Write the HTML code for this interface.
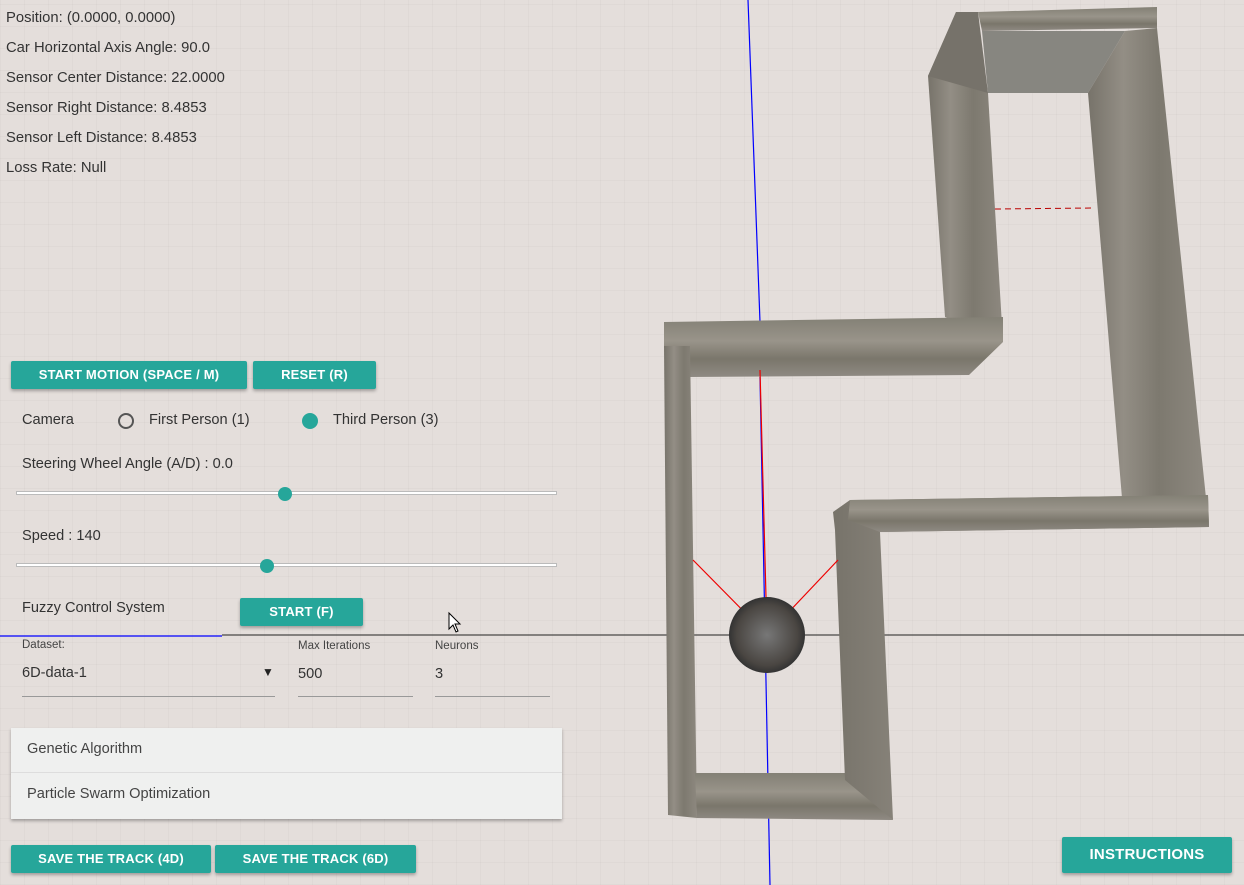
<!DOCTYPE html>
<html><head><meta charset="utf-8"><style>
*{box-sizing:border-box;margin:0;padding:0}
body{width:1244px;height:885px;overflow:hidden;position:relative;font-family:"Liberation Sans",sans-serif;
background-color:#e4dedb;
background-image:repeating-linear-gradient(90deg,rgba(0,0,0,0.025) 0 1px,transparent 1px 24px),repeating-linear-gradient(0deg,rgba(0,0,0,0.025) 0 1px,transparent 1px 22px);}
.t{position:absolute;left:6px;font-size:14.8px;color:#333}
.btn{position:absolute;background:#26a69a;color:#fff;font-weight:bold;font-size:13px;text-align:center;border-radius:2px;box-shadow:0 2px 3px rgba(0,0,0,0.3);letter-spacing:0.2px}
.lbl{position:absolute;font-size:14.6px;color:#333}
.sl{position:absolute;left:16px;width:541px;height:4px;border:1px solid #bbb;background:#fff}
.th{position:absolute;width:14px;height:14px;border-radius:50%;background:#26a69a}
.sm{position:absolute;font-size:11.5px;color:#444}
.ul{position:absolute;height:1px;background:#999}
</style></head><body>
<svg width="1244" height="885" style="position:absolute;left:0;top:0">
<defs>
<linearGradient id="gv" x1="0" x2="1" y1="0" y2="0">
<stop offset="0" stop-color="#77736a"/><stop offset="0.3" stop-color="#938e85"/><stop offset="0.6" stop-color="#7d796f"/><stop offset="1" stop-color="#8d887f"/></linearGradient>
<linearGradient id="gh" x1="0" x2="0" y1="0" y2="1">
<stop offset="0" stop-color="#838075"/><stop offset="0.4" stop-color="#99948a"/><stop offset="0.7" stop-color="#7a766b"/><stop offset="1" stop-color="#8f8a83"/></linearGradient>
<radialGradient id="gb"><stop offset="0" stop-color="#777"/><stop offset="0.8" stop-color="#4a4642"/><stop offset="1" stop-color="#333"/></radialGradient>
</defs>
<line x1="748" y1="0" x2="760" y2="322" stroke="#00f" stroke-width="1.2"/>
<line x1="760" y1="377" x2="770" y2="885" stroke="#00f" stroke-width="1.2"/>
<line x1="222" y1="635" x2="1244" y2="635" stroke="#222" stroke-width="1"/>
<line x1="0" y1="636" x2="222" y2="636" stroke="#00f" stroke-width="1.2"/>
<line x1="995" y1="209" x2="1092" y2="208" stroke="#b00" stroke-width="1" stroke-dasharray="6,4"/>
<polygon points="928,76 956,12 988,93 1003,342 945,317" fill="url(#gv)"/>
<polygon points="956,12 978,12 988,93 928,76" fill="#76726a"/>
<polygon points="982,31 1125,31 1088,93 988,93" fill="#878680"/>
<polygon points="978,12 1157,7 1157,28 982,31" fill="url(#gh)"/>
<polygon points="1125,31 1157,28 1206,498 1122,498 1088,93" fill="url(#gv)"/>
<polygon points="664,322 1003,317 1003,342 969,375 690,377 690,346 664,346" fill="url(#gh)"/>
<polygon points="664,346 690,346 697,818 668,815" fill="url(#gv)"/>
<polygon points="695,773 845,773 893,820 697,818" fill="url(#gh)"/>
<polygon points="833,512 850,500 1208,495 1209,527 880,532 893,820 845,780 835,530" fill="url(#gv)"/>
<polygon points="850,500 1208,495 1209,527 880,532 848,520" fill="url(#gh)"/>
<line x1="767" y1="635" x2="760" y2="370" stroke="#e00" stroke-width="1.2"/>
<line x1="767" y1="635" x2="693" y2="560" stroke="#e00" stroke-width="1.2"/>
<line x1="767" y1="635" x2="838" y2="560" stroke="#e00" stroke-width="1.2"/>
<circle cx="767" cy="635" r="38" fill="url(#gb)"/>
<path d="M449 613 L449 629 L453 625 L456 632 L458 631 L455 624 L460 624 Z" fill="#fff" stroke="#000" stroke-width="1"/>
</svg>
<div class="t" style="top:10px">Position: (0.0000, 0.0000)</div>
<div class="t" style="top:40px">Car Horizontal Axis Angle: 90.0</div>
<div class="t" style="top:70px">Sensor Center Distance: 22.0000</div>
<div class="t" style="top:100px">Sensor Right Distance: 8.4853</div>
<div class="t" style="top:130px">Sensor Left Distance: 8.4853</div>
<div class="t" style="top:160px">Loss Rate: Null</div>

<div class="btn" style="left:11px;top:361px;width:236px;height:28px;line-height:28px">START MOTION (SPACE / M)</div>
<div class="btn" style="left:253px;top:361px;width:123px;height:28px;line-height:28px">RESET (R)</div>
<div class="lbl" style="left:22px;top:412px">Camera</div>
<div style="position:absolute;left:118px;top:413px;width:16px;height:16px;border:2px solid #555;border-radius:50%"></div>
<div class="lbl" style="left:149px;top:412px">First Person (1)</div>
<div style="position:absolute;left:302px;top:413px;width:16px;height:16px;background:#26a69a;border-radius:50%"></div>
<div class="lbl" style="left:333px;top:412px">Third Person (3)</div>
<div class="lbl" style="left:22px;top:456px">Steering Wheel Angle (A/D) : 0.0</div>
<div class="sl" style="top:491px"></div><div class="th" style="left:278px;top:487px"></div>
<div class="lbl" style="left:22px;top:528px">Speed : 140</div>
<div class="sl" style="top:563px"></div><div class="th" style="left:260px;top:559px"></div>
<div class="lbl" style="left:22px;top:600px">Fuzzy Control System</div>
<div class="btn" style="left:240px;top:598px;width:123px;height:28px;line-height:28px">START (F)</div>

<div class="sm" style="left:22px;top:639px">Dataset:</div>
<div class="lbl" style="left:22px;top:665px">6D-data-1</div>
<div style="position:absolute;left:262px;top:665px;font-size:12px;color:#222">▼</div>
<div class="ul" style="left:22px;top:696px;width:253px"></div>
<div class="sm" style="left:298px;top:640px">Max Iterations</div>
<div class="lbl" style="left:298px;top:666px">500</div>
<div class="ul" style="left:298px;top:696px;width:115px"></div>
<div class="sm" style="left:435px;top:640px">Neurons</div>
<div class="lbl" style="left:435px;top:666px">3</div>
<div class="ul" style="left:435px;top:696px;width:115px"></div>

<div style="position:absolute;left:11px;top:728px;width:551px;height:91px;background:#eff0ef;box-shadow:0 2px 3px rgba(0,0,0,0.3)">
<div style="height:45px;border-bottom:1px solid #ddd;padding:13px 16px;font-size:14.6px;color:#444">Genetic Algorithm</div>
<div style="padding:13px 16px;font-size:14.6px;color:#444">Particle Swarm Optimization</div>
</div>
<div class="btn" style="left:11px;top:845px;width:200px;height:28px;line-height:28px">SAVE THE TRACK (4D)</div>
<div class="btn" style="left:215px;top:845px;width:201px;height:28px;line-height:28px">SAVE THE TRACK (6D)</div>
<div class="btn" style="left:1062px;top:837px;width:170px;height:36px;line-height:36px;font-size:15px">INSTRUCTIONS</div>
</body></html>
